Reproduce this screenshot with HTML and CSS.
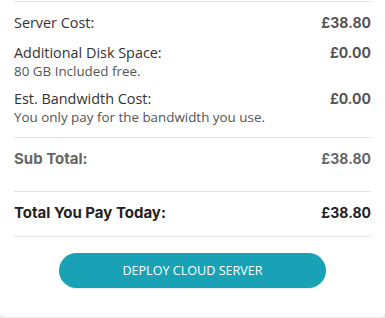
FILE: index.html
```html
<!DOCTYPE html>
<html>
<head>
<meta charset="utf-8">
<link rel="stylesheet" href="styles.css">
</head>
<body>
<div class="card">
  <div class="section items">
    <div class="row">
      <div class="label">Server Cost:</div>
      <div class="amount">£38.80</div>
    </div>
    <div class="row">
      <div>
        <div class="label">Additional Disk Space:</div>
        <div class="note">80 GB Included free.</div>
      </div>
      <div class="amount">£0.00</div>
    </div>
    <div class="row">
      <div>
        <div class="label">Est. Bandwidth Cost:</div>
        <div class="note">You only pay for the bandwidth you use.</div>
      </div>
      <div class="amount">£0.00</div>
    </div>
  </div>
  <div class="section subtotal">
    <div class="row">
      <div class="strong">Sub Total:</div>
      <div class="amount">£38.80</div>
    </div>
  </div>
  <div class="section total">
    <div class="row">
      <div class="strong">Total You Pay Today:</div>
      <div class="amount">£38.80</div>
    </div>
  </div>
  <div class="actions">
    <button class="deploy">DEPLOY CLOUD SERVER</button>
  </div>
</div>
</body>
</html>
```
FILE: styles.css
```css
html, body {
  margin: 0;
  padding: 0;
  background: #ececec;
}
.card {
  width: 385px;
  height: 317px;
  background: #fff;
  border-radius: 0 0 5px 5px;
  padding: 1px 14px 0 14px;
  box-sizing: border-box;
  font-family: "Open Sans", sans-serif;
}
.section {
  border-top: 1px solid #e2e2e2;
}
.items {
  padding: 11px 0 12px;
  display: flex;
  flex-direction: column;
  gap: 10px;
}
.row {
  display: flex;
  justify-content: space-between;
  align-items: flex-start;
}
.label {
  font-size: 14.4px;
  line-height: 20px;
  color: #333;
}
.note {
  font-size: 13.4px;
  line-height: 16px;
  color: #555;
}
.amount {
  font-family: Inter, sans-serif;
  font-weight: 700;
  font-size: 14px;
  line-height: 20px;
  color: #555;
}
.strong {
  font-family: Inter, sans-serif;
  font-weight: 700;
  font-size: 15px;
  line-height: 20px;
}
.subtotal {
  padding: 11px 0 22px;
}
.subtotal .strong, .subtotal .amount {
  color: #666;
}
.total {
  padding: 11px 0 13px;
  border-bottom: 1px solid #e2e2e2;
}
.total .strong, .total .amount {
  color: #222;
}
.actions {
  display: flex;
  justify-content: center;
  padding-top: 16px;
}
.deploy {
  width: 267px;
  height: 35px;
  border: none;
  border-radius: 18px;
  background: #19a2b5;
  color: #fff;
  font-family: "Open Sans", sans-serif;
  font-size: 12.6px;
  padding: 0;
  box-shadow: 0 1px 1px rgba(0,0,0,0.08);
}
```
